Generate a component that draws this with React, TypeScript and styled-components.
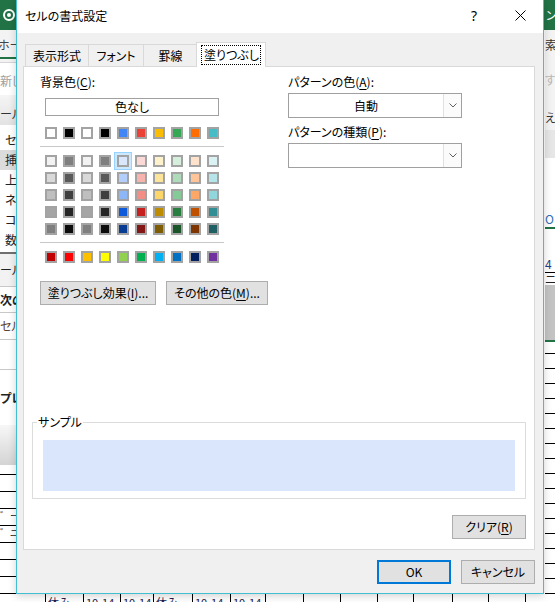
import React from "react";
import styled, { createGlobalStyle, css } from "styled-components";

const GlobalStyle = createGlobalStyle`
  html, body { margin: 0; padding: 0; background: #ffffff; }
  body {
    font-family: "Noto Sans CJK JP", "Noto Sans", sans-serif;
    font-size: 12px;
    color: #000;
    font-feature-settings: "palt";
    overflow: hidden;
  }
  #root { width: 555px; height: 602px; }
  * { box-sizing: border-box; }
`;

/* ---------- palette data ---------- */
const themeRow = ["#FFFFFF", "#000000", "#FFFFFF", "#000000", "#4285F4", "#EA4335", "#FBBC04", "#34A853", "#FF6D01", "#46BDC6"];
const tintRows = [
  ["#F2F2F2", "#7F7F7F", "#F2F2F2", "#7F7F7F", "#D9E7FD", "#FBD9D7", "#FEF2CD", "#D6EEDC", "#FFE2CC", "#DAF2F4"],
  ["#D9D9D9", "#595959", "#D9D9D9", "#595959", "#B3CEFB", "#F7B4AE", "#FDE49B", "#AEDCBA", "#FFC599", "#B5E5E8"],
  ["#BFBFBF", "#3F3F3F", "#BFBFBF", "#3F3F3F", "#8DB6F9", "#F28E86", "#FDD66A", "#85CB97", "#FFA766", "#90D7DD"],
  ["#A5A5A5", "#262626", "#A5A5A5", "#262626", "#0C5ADB", "#C5221F", "#BD8C03", "#277E3E", "#BF5000", "#2F8F95"],
  ["#7F7F7F", "#0C0C0C", "#7F7F7F", "#0C0C0C", "#083C92", "#831715", "#7E5D02", "#1A5429", "#7F3500", "#1F5F63"],
];
const standardRow = ["#C00000", "#FF0000", "#FFC000", "#FFFF00", "#92D050", "#00B050", "#00B0F0", "#0070C0", "#002060", "#7030A0"];

const navChars = ["セ", "挿", "上", "ネ", "コ", "数"];
const bottomCells: { w: number; t?: string }[] = [
  { w: 45 }, { w: 38, t: "休み" }, { w: 37, t: "10-14" }, { w: 33, t: "10-14" }, { w: 39, t: "休み" },
  { w: 38, t: "10-14" }, { w: 35, t: "10-14" }, { w: 38 }, { w: 37 }, { w: 37 }, { w: 36 }, { w: 39 },
  { w: 36 }, { w: 37 }, { w: 40 },
];

/* ---------- page / backdrop ---------- */
const Screen = styled.div`
  position: relative;
  width: 555px;
  height: 602px;
  overflow: hidden;
`;

const Backdrop = styled.div`
  display: grid;
  grid-template-columns: 16px 1fr 10px;
  grid-template-rows: 30px 1fr 8px;
  width: 100%;
  height: 100%;
  background: #fff;
`;

const AppBar = styled.div`
  grid-column: 1 / -1;
  background: #217346;
  display: flex;
  align-items: center;
  justify-content: space-between;
  padding-left: 3px;
  color: #fff;
`;

const AppIcon = styled.div`
  width: 12px;
  height: 12px;
  border: 2px solid #fff;
  border-radius: 50%;
  display: grid;
  place-items: center;
`;

const AppIconDot = styled.div`
  width: 4px;
  height: 4px;
  border-radius: 50%;
  background: #fff;
`;

const AppBarTitle = styled.div`
  width: 10px;
  overflow: hidden;
  white-space: nowrap;
  font-size: 12px;
  line-height: 16px;
  padding-left: 1px;
`;

const LeftStrip = styled.div`
  grid-column: 1;
  display: flex;
  flex-direction: column;
  overflow: hidden;
  white-space: nowrap;
  font-size: 12px;
  line-height: 16px;
`;

const RibbonTabs = styled.div`
  height: 33px;
  background: #f3f3f3;
  border-bottom: 1px solid #d6d6d6;
  padding-top: 7px;
`;

const RibbonTabLabel = styled.div`
  margin-left: -2px;
  color: #444;
  padding-bottom: 4px;
  border-bottom: 2px solid #217346;
`;

const RibbonBody = styled.div`
  height: 32px;
  display: flex;
  align-items: center;
  padding-top: 3px;
  color: #a0a0a0;
`;

const PaneTitle = styled.div`
  height: 30px;
  background: linear-gradient(#f5f5f5, #e3e3e3);
  display: flex;
  align-items: flex-end;
  padding-bottom: 3px;
  color: #333;
`;

const PaneGap = styled.div`
  height: 5px;
`;

const NavList = styled.div`
  display: flex;
  flex-direction: column;
`;

const NavRow = styled.div<{ $active?: boolean }>`
  height: 20px;
  display: flex;
  align-items: center;
  gap: 4px;
  padding-left: 1px;
  color: #222;
  background: ${(p) => (p.$active ? "#dcdcdc" : "transparent")};
`;

const PaneRule = styled.div`
  height: 4px;
  border-bottom: 2px solid #707070;
`;

const OutlineRow = styled.div<{ $h: number; $bold?: boolean; $bg?: string; $noLine?: boolean; $color?: string }>`
  height: ${(p) => p.$h}px;
  display: flex;
  align-items: center;
  background: ${(p) => p.$bg ?? "transparent"};
  font-weight: ${(p) => (p.$bold ? 700 : 400)};
  color: ${(p) => p.$color ?? "#222"};
  border-bottom: ${(p) => (p.$noLine ? "none" : "1px solid #c8c8c8")};
`;

const PaneFade = styled.div`
  height: 40px;
  background: linear-gradient(#f7f7f7, #d4d4d4);
`;

const SheetLine = styled.div<{ $h: number }>`
  height: ${(p) => p.$h}px;
  border-bottom: 1px solid #000;
  font-size: 10px;
  line-height: 14px;
  color: #222;
  overflow: hidden;
`;

const SheetCanvas = styled.div`
  grid-column: 2;
  background: #fff;
`;

const RightStrip = styled.div`
  grid-column: 3;
  display: flex;
  flex-direction: column;
  overflow: hidden;
  white-space: nowrap;
  font-size: 12px;
  line-height: 16px;
`;

const RightRibbon = styled.div`
  height: 100px;
  background: #f3f3f3;
  display: flex;
  flex-direction: column;
  padding-top: 7px;
`;

const RibbonGlyph = styled.div<{ $mt: number; $faint?: boolean }>`
  margin-top: ${(p) => p.$mt}px;
  color: ${(p) => (p.$faint ? "#b8b8b8" : "#333")};
`;

const RightBand = styled.div<{ $h: number; $bg?: string; $line?: string; $color?: string }>`
  height: ${(p) => p.$h}px;
  background: ${(p) => p.$bg ?? "#fff"};
  border-bottom: ${(p) => p.$line ?? "none"};
  color: ${(p) => p.$color ?? "#222"};
  display: flex;
  align-items: flex-end;
  overflow: hidden;
  line-height: ${(p) => Math.min(p.$h, 16)}px;
`;

const BottomRow = styled.div`
  grid-column: 1 / -1;
  display: flex;
  overflow: hidden;
  background: #fff;
`;

const BottomCell = styled.div<{ $w: number; $first?: boolean }>`
  flex: 0 0 ${(p) => p.$w}px;
  border-left: ${(p) => (p.$first ? "none" : "1px solid #000")};
  padding: 1px 0 0 2px;
  font-size: 11px;
  line-height: 15px;
  color: #1d1d4d;
  white-space: nowrap;
  overflow: hidden;
  font-feature-settings: "palt";
`;

/* ---------- dialog ---------- */
const Dialog = styled.div`
  position: absolute;
  left: 16px;
  top: 0;
  width: 528px;
  height: 594px;
  border: 1px solid #3fbfd0;
  border-top: none;
  background: #f0f0f0;
  display: flex;
  flex-direction: column;
  box-shadow: 0 2px 8px rgba(0, 0, 0, 0.18);
`;

const TitleBar = styled.div`
  height: 33px;
  flex: 0 0 33px;
  background: #fff;
  display: flex;
  align-items: center;
  padding-left: 8px;
`;

const TitleText = styled.div`
  flex: 1;
  font-size: 12px;
  line-height: 16px;
  margin-top: -1px;
`;

const CaptionButton = styled.div`
  width: 46px;
  height: 33px;
  display: flex;
  align-items: center;
  justify-content: center;
  font-size: 14px;
  font-family: "Segoe UI", "Noto Sans", sans-serif;
  padding-bottom: 2px;
`;

const Body = styled.div`
  flex: 1;
  display: flex;
  flex-direction: column;
  padding: 9px 8px 9px 6px;
  min-height: 0;
`;

const TabStrip = styled.div`
  display: flex;
  align-items: flex-end;
  height: 24px;
  padding-left: 2px;
`;

const Tab = styled.div<{ $w: number; $active?: boolean }>`
  width: ${(p) => p.$w}px;
  height: 22px;
  border: 1px solid #d9d9d9;
  border-bottom: none;
  margin-right: -1px;
  background: #f0f0f0;
  display: flex;
  align-items: center;
  justify-content: center;
  font-size: 12px;
  line-height: 16px;
  white-space: nowrap;
  ${(p) =>
    p.$active &&
    css`
      position: relative;
      z-index: 1;
      height: 25px;
      margin: 0 -1px -1px -1px;
      background: #fff;
      padding-bottom: 1px;
    `}
`;

const FocusRing = styled.span`
  outline: 1px dotted #000;
  outline-offset: 0;
  padding: 1px 1px 1px 2px;
`;

const Panel = styled.div`
  flex: 1;
  background: #fff;
  border: 1px solid #d9d9d9;
  display: flex;
  flex-direction: column;
  padding: 7px 8px 10px 8px;
`;

const TopSection = styled.div`
  display: flex;
  gap: 64px;
  padding-left: 8px;
`;

const LeftCol = styled.div`
  width: 184px;
  flex: 0 0 184px;
  display: flex;
  flex-direction: column;
`;

const RightCol = styled.div`
  width: 174px;
  display: flex;
  flex-direction: column;
`;

const Label = styled.div<{ $mt?: number }>`
  font-size: 12px;
  line-height: 16px;
  white-space: nowrap;
  margin-top: ${(p) => p.$mt ?? 0}px;
`;

const Accel = styled.span`
  text-decoration: underline;
  text-underline-offset: 2px;
`;

const NoColorBox = styled.div`
  margin: 8px 0 0 5px;
  width: 174px;
  height: 18px;
  border: 1px solid #a0a0a0;
  display: flex;
  align-items: center;
  justify-content: center;
  font-size: 12px;
  line-height: 16px;
`;

const SwatchRow = styled.div<{ $mt?: number }>`
  display: flex;
  gap: 6px;
  padding-left: 5px;
  margin-top: ${(p) => p.$mt ?? 0}px;
`;

const SwatchGrid = styled.div`
  display: flex;
  flex-direction: column;
  gap: 5px;
  margin-top: 8px;
`;

const Swatch = styled.div<{ $c: string; $selected?: boolean }>`
  width: 12px;
  height: 12px;
  flex: 0 0 12px;
  border: 2px solid #a3a3a3;
  background: ${(p) => p.$c};
  ${(p) =>
    p.$selected &&
    css`
      box-shadow: 0 0 0 2px #cce8ff;
      outline: 1px solid #99d1ff;
      outline-offset: 2px;
    `}
`;

const Separator = styled.div`
  height: 1px;
  background: #c8c8c8;
  margin-top: 7px;
`;

const ButtonRow = styled.div`
  display: flex;
  gap: 10px;
  margin-top: 18px;
`;

const Button = styled.button<{ $w: number; $primary?: boolean }>`
  width: ${(p) => p.$w}px;
  flex: 0 0 ${(p) => p.$w}px;
  height: 24px;
  padding: 0;
  border: ${(p) => (p.$primary ? "2px solid #0078d7" : "1px solid #adadad")};
  background: #e1e1e1;
  font-family: inherit;
  font-size: 12px;
  line-height: 16px;
  color: #000;
  white-space: nowrap;
  font-feature-settings: "palt";
`;

const Dropdown = styled.div`
  margin-top: 3px;
  height: 25px;
  border: 1px solid #a0a0a0;
  background: #fff;
  display: flex;
`;

const DropdownValue = styled.div`
  flex: 1;
  display: flex;
  align-items: center;
  justify-content: center;
  font-size: 12px;
  line-height: 16px;
`;

const DropdownArrow = styled.div`
  width: 18px;
  border-left: 1px solid #e0e0e0;
  background: #fbfbfb;
  display: flex;
  align-items: center;
  justify-content: center;
`;

const SampleGroup = styled.fieldset`
  margin: auto 0 0 0;
  min-inline-size: 0;
  border: 1px solid #dcdcdc;
  padding: 10px 10px 7px 10px;
`;

const SampleLegend = styled.legend`
  padding: 0 1px;
  margin-left: -6px;
  font-size: 12px;
  line-height: 16px;
`;

const SamplePreview = styled.div`
  height: 51px;
  background: #dae6fb;
`;

const ClearRow = styled.div`
  display: flex;
  justify-content: flex-end;
  margin-top: 16px;
`;

const Footer = styled.div`
  display: flex;
  justify-content: flex-end;
  gap: 10px;
  padding-top: 10px;
`;

/* ---------- small drawings ---------- */
const Chevron = () => (
  <svg width="8" height="5" viewBox="0 0 8 5">
    <polyline points="0.5,0.5 4,4 7.5,0.5" fill="none" stroke="#606060" strokeWidth="1" />
  </svg>
);

const CloseGlyph = () => (
  <svg width="11" height="11" viewBox="0 0 11 11">
    <path d="M0.5 0.5 L10.5 10.5 M10.5 0.5 L0.5 10.5" stroke="#000" strokeWidth="1" />
  </svg>
);

const NavArrow = () => (
  <svg width="8" height="6" viewBox="0 0 8 6">
    <path d="M0 3 H5" stroke="#111" strokeWidth="1.6" />
    <polygon points="4,0 8,3 4,6" fill="#111" />
  </svg>
);

const Dropdowny = ({ value }: { value?: string }) => (
  <Dropdown>
    <DropdownValue>{value}</DropdownValue>
    <DropdownArrow>
      <Chevron />
    </DropdownArrow>
  </Dropdown>
);

export default function App() {
  return (
    <>
      <GlobalStyle />
      <Screen>
        <Backdrop>
          <AppBar>
            <AppIcon>
              <AppIconDot />
            </AppIcon>
            <AppBarTitle>ンプル</AppBarTitle>
          </AppBar>

          <LeftStrip>
            <RibbonTabs>
              <RibbonTabLabel>ホーム</RibbonTabLabel>
            </RibbonTabs>
            <RibbonBody>新しい</RibbonBody>
            <PaneTitle>ール</PaneTitle>
            <PaneGap />
            <NavList>
              {navChars.map((c, i) => (
                <NavRow key={i} $active={i === 1}>
                  <NavArrow />
                  <span>{c}</span>
                </NavRow>
              ))}
            </NavList>
            <PaneRule />
            <OutlineRow $h={33} $bg="#f2f2f2">ール</OutlineRow>
            <OutlineRow $h={26} $bold>次の</OutlineRow>
            <OutlineRow $h={27} $color="#5a4030">セル</OutlineRow>
            <OutlineRow $h={30} />
            <OutlineRow $h={55} $bold $noLine>プレ</OutlineRow>
            <PaneFade />
            <SheetLine $h={10} />
            <SheetLine $h={17} />
            <SheetLine $h={17} />
            <SheetLine $h={17}>゛ー</SheetLine>
            <SheetLine $h={17}>゛ニ</SheetLine>
            <SheetLine $h={17} />
            <SheetLine $h={17} />
            <SheetLine $h={17} />
          </LeftStrip>

          <SheetCanvas />

          <RightStrip>
            <RightRibbon>
              <RibbonGlyph $mt={0}>索</RibbonGlyph>
              <RibbonGlyph $mt={19} $faint>す</RibbonGlyph>
              <RibbonGlyph $mt={22}>え</RibbonGlyph>
            </RightRibbon>
            <RightBand $h={28} $bg="#e6e6e6" />
            <RightBand $h={54} />
            <RightBand $h={17} $line="2px solid #217346" $color="#2f6db5">O</RightBand>
            <RightBand $h={27} />
            <RightBand $h={17} $line="1px solid #000" $color="#1f3c88">4</RightBand>
            <RightBand $h={12}>ニ</RightBand>
            <RightBand $h={57} $bg="#c3c3c3" $line="2px solid #217346" />
            <RightBand $h={12} $line="1px solid #000" />
            {Array.from({ length: 16 }).map((_, i) => (
              <RightBand key={i} $h={15} $line="1px solid #000" />
            ))}
          </RightStrip>

          <BottomRow>
            {bottomCells.map((c, i) => (
              <BottomCell key={i} $w={c.w} $first={i === 0}>
                {c.t}
              </BottomCell>
            ))}
          </BottomRow>
        </Backdrop>

        <Dialog>
          <TitleBar>
            <TitleText>セルの書式設定</TitleText>
            <CaptionButton>?</CaptionButton>
            <CaptionButton>
              <CloseGlyph />
            </CaptionButton>
          </TitleBar>

          <Body>
            <TabStrip>
              <Tab $w={64}>表示形式</Tab>
              <Tab $w={56}>フォント</Tab>
              <Tab $w={55}>罫線</Tab>
              <Tab $w={70} $active>
                <FocusRing>塗りつぶし</FocusRing>
              </Tab>
            </TabStrip>

            <Panel>
              <TopSection>
                <LeftCol>
                  <Label>
                    背景色(<Accel>C</Accel>):
                  </Label>
                  <NoColorBox>色なし</NoColorBox>
                  <SwatchRow $mt={11}>
                    {themeRow.map((c, i) => (
                      <Swatch key={i} $c={c} />
                    ))}
                  </SwatchRow>
                  <Separator />
                  <SwatchGrid>
                    {tintRows.map((row, r) => (
                      <SwatchRow key={r}>
                        {row.map((c, i) => (
                          <Swatch key={i} $c={c} $selected={r === 0 && i === 4} />
                        ))}
                      </SwatchRow>
                    ))}
                  </SwatchGrid>
                  <Separator />
                  <SwatchRow $mt={8}>
                    {standardRow.map((c, i) => (
                      <Swatch key={i} $c={c} />
                    ))}
                  </SwatchRow>
                  <ButtonRow>
                    <Button $w={116}>
                      塗りつぶし効果(<Accel>I</Accel>)...
                    </Button>
                    <Button $w={102}>
                      その他の色(<Accel>M</Accel>)...
                    </Button>
                  </ButtonRow>
                </LeftCol>

                <RightCol>
                  <Label>
                    パターンの色(<Accel>A</Accel>):
                  </Label>
                  <Dropdowny value="自動" />
                  <Label $mt={6}>
                    パターンの種類(<Accel>P</Accel>):
                  </Label>
                  <Dropdowny />
                </RightCol>
              </TopSection>

              <SampleGroup>
                <SampleLegend>サンプル</SampleLegend>
                <SamplePreview />
              </SampleGroup>

              <ClearRow>
                <Button $w={74}>
                  クリア(<Accel>R</Accel>)
                </Button>
              </ClearRow>
            </Panel>

            <Footer>
              <Button $w={74} $primary>
                OK
              </Button>
              <Button $w={74}>キャンセル</Button>
            </Footer>
          </Body>
        </Dialog>
      </Screen>
    </>
  );
}
